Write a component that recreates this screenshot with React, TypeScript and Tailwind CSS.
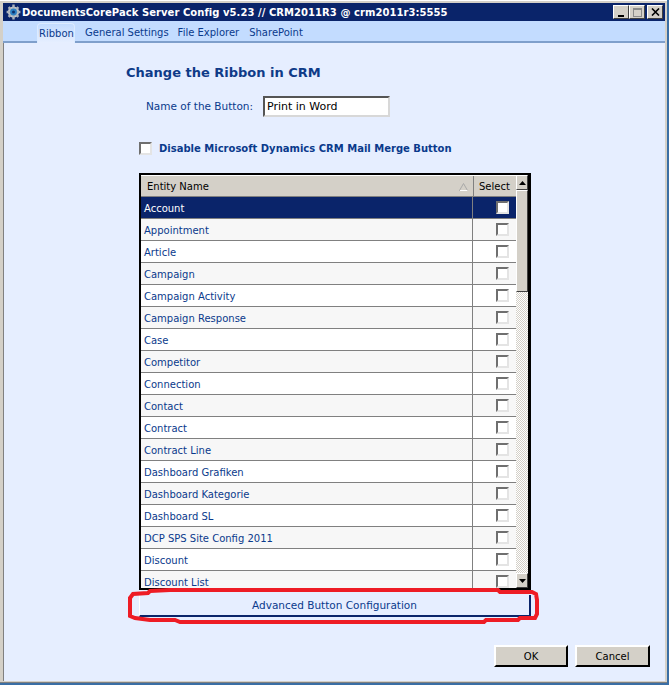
import React from 'react';

const entities = [
  'Account', 'Appointment', 'Article', 'Campaign', 'Campaign Activity', 'Campaign Response',
  'Case', 'Competitor', 'Connection', 'Contact', 'Contract', 'Contract Line',
  'Dashboard Grafiken', 'Dashboard Kategorie', 'Dashboard SL', 'DCP SPS Site Config 2011',
  'Discount', 'Discount List',
];

const raised = 'border border-t-white border-l-white border-r-[#404040] border-b-[#404040] bg-[#d4d0c8]';
const sunkenBox = 'block w-[13px] h-[13px] bg-white border-2 border-t-[#6f6f6f] border-l-[#6f6f6f] border-r-[#e4e4e4] border-b-[#e4e4e4]';
const dialogButton = 'h-[22px] bg-[#d4d0c8] text-black text-[10px] border-2 border-t-white border-l-white border-r-black border-b-black';

function GearIcon() {
  return (
    <svg width="15" height="16" viewBox="0 0 15 16" className="shrink-0">
      <circle cx="7.5" cy="8" r="5.6" fill="#c5c9cf" />
      <g stroke="#aeb4bb" strokeWidth="2.4">
        <path d="M7.5 .6v14.8M.6 8h13.8M2.6 3.1l9.8 9.8M12.4 3.1l-9.8 9.8" />
      </g>
      <circle cx="7.5" cy="8" r="3.4" fill="#2a7fc4" />
      <circle cx="7.5" cy="8" r="1.5" fill="#0c2f6b" />
    </svg>
  );
}

function WindowButton({ kind }: { kind: 'min' | 'max' | 'close' }) {
  return (
    <span className={`${raised} w-[16px] h-[14px] flex items-center justify-center`}>
      {kind === 'min' && <span className="w-[6px] h-[2px] bg-black mt-[7px] -ml-[1px]" />}
      {kind === 'max' && <span className="w-[9px] h-[9px] border border-[#8a8a8a] border-t-2" />}
      {kind === 'close' && (
        <svg width="9" height="8" viewBox="0 0 9 8">
          <path d="M1 .5l7 7M8 .5l-7 7" stroke="#000" strokeWidth="1.6" fill="none" />
        </svg>
      )}
    </span>
  );
}

function Row({ name, index }: { name: string; index: number }) {
  const selected = index === 0;
  const bg = selected ? 'bg-[#0a246a] text-white' : index % 2 === 1 ? 'bg-[#f7f7f7] text-[#0a3a8c]' : 'bg-white text-[#0a3a8c]';
  return (
    <div className={`${bg} flex h-[22px] shrink-0 border-b border-[#808080]`}>
      <div className="w-[332px] pl-[3px] pt-[1px] leading-[21px] border-r border-[#808080]">{name}</div>
      <div className="flex-1 flex items-center justify-end pr-[7px]">
        <span className={sunkenBox} />
      </div>
    </div>
  );
}

export default function App() {
  return (
    <div
      className="relative w-[669px] h-[685px] overflow-hidden bg-[#d4d0c8] border-r-2 border-[#3a6ea5] flex flex-col text-[10px] text-[#0a3a8c]"
      style={{ fontFamily: '"DejaVu Sans", Verdana, sans-serif' }}
    >
      <div className="h-[3px] shrink-0 bg-[#d4d0c8] border-t border-white" />
      {/* Title bar */}
      <div className="ml-[3px] mr-[2px] h-[18px] shrink-0 bg-[#0a246a] flex items-center pl-[3px] pr-[2px] gap-[1px] text-white">
        <GearIcon />
        <span className="font-bold text-[10px] tracking-[0.05px] whitespace-nowrap flex-1">DocumentsCorePack Server Config v5.23 // CRM2011R3 @ crm2011r3:5555</span>
        <div className="flex">
          <WindowButton kind="min" />
          <WindowButton kind="max" />
          <span className="w-[2px]" />
          <WindowButton kind="close" />
        </div>
      </div>
      {/* Menu */}
      <div className="ml-[3px] mr-[2px] h-[22px] shrink-0 bg-[#c3dcff] border-b-2 border-[#7f9fcb] flex items-start pl-[34px] text-[#0a3a8c]">
        <span className="w-[38px] h-[20px] mt-[2px] px-[1px] pt-[1px] leading-[17px] rounded-t bg-gradient-to-b from-[#c3dcff] to-[#e7efff] border-x border-t border-[#dcebff]">Ribbon</span>
        <span className="ml-[10px] mt-[1px] leading-[21px]">General Settings</span>
        <span className="ml-[9px] mt-[1px] leading-[21px]">File Explorer</span>
        <span className="ml-[10px] mt-[1px] leading-[21px]">SharePoint</span>
      </div>
      {/* Content */}
      <div className="ml-[3px] mr-[2px] h-[638px] shrink-0 bg-[#e6eeff] border-l border-[#808080] flex flex-col pl-[122px]">
        <h1 className="mt-[22px] font-bold text-[13px] leading-[16px] text-[#0f3b88]">Change the Ribbon in CRM</h1>
        <div className="mt-[15px] ml-[20px] flex items-center h-[21px] text-[10.5px]">
          <span className="w-[117px] whitespace-nowrap">Name of the Button:</span>
          <input
            readOnly
            value="Print in Word"
            className="w-[127px] h-[21px] bg-white text-black text-[11px] px-[2px] border-2 border-t-[#555] border-l-[#555] border-r-[#d8d8d8] border-b-[#d8d8d8] outline-none"
          />
        </div>
        <div className="mt-[24px] ml-[13px] flex items-center gap-[7px] h-[14px]">
          <span className={sunkenBox} />
          <span className="font-bold whitespace-nowrap">Disable Microsoft Dynamics CRM Mail Merge Button</span>
        </div>
        {/* Grid */}
        <div className="mt-[18px] ml-[13px] w-[392px] h-[417px] shrink-0 bg-white border-2 border-black border-r-[3px] flex overflow-hidden">
          <div className="w-[375px] flex flex-col text-[#0a3a8c]">
            <div className="h-[22px] shrink-0 flex bg-[#d4d0c8] text-black border-b border-[#808080] border-t border-t-white">
              <div className="w-[332px] pl-[6px] pt-[1px] leading-[21px] flex justify-between items-center">
                <span>Entity Name</span>
                <svg width="9" height="8" viewBox="0 0 9 8" className="mr-[5px]">
                  <path d="M4.5 .5L8.5 7.5H.5Z" fill="none" stroke="#a8a8a8" />
                  <path d="M1 7.5H8.5" stroke="#fff" />
                </svg>
              </div>
              <div className="flex-1 border-l border-[#808080] pt-[1px] leading-[20px] pl-[5px]">Select</div>
            </div>
            {entities.map((name, i) => (
              <Row key={name} name={name} index={i} />
            ))}
          </div>
          {/* Scrollbar */}
          <div className="flex-1 flex flex-col bg-[repeating-conic-gradient(#d4d0c8_0_25%,#ffffff_0_50%)] bg-[length:2px_2px]">
            <div className={`${raised} h-[15px] shrink-0 flex items-center justify-center`}>
              <svg width="7" height="4" viewBox="0 0 7 4"><path d="M3.5 0L7 4H0Z" fill="#000" /></svg>
            </div>
            <div className={`${raised} h-[102px] shrink-0`} />
            <div className="flex-1" />
            <div className={`${raised} h-[15px] shrink-0 flex items-center justify-center`}>
              <svg width="7" height="4" viewBox="0 0 7 4"><path d="M0 0H7L3.5 4Z" fill="#000" /></svg>
            </div>
          </div>
        </div>
        <div className="mt-[5px] ml-[13px] w-[392px] h-[22px] shrink-0 border-l border-l-white border-r-2 border-b-2 border-r-[#0a246a] border-b-[#0a246a] text-center text-[10.5px] leading-[20px] text-[#0a3a8c]">
          Advanced Button Configuration
        </div>
        <div className="mt-[28px] flex justify-end gap-[7px] pr-[15px]">
          <button className={`${dialogButton} w-[74px]`}>OK</button>
          <button className={`${dialogButton} w-[75px]`}>Cancel</button>
        </div>
      </div>
      <div className="mt-[1px] h-[1px] shrink-0 bg-[#808080]" />
      <div className="flex-1 bg-[#3a6ea5]" />
      {/* Red hand-drawn annotation */}
      <svg className="absolute left-0 top-0 pointer-events-none" width="669" height="685" viewBox="0 0 669 685">
        <path
          d="M170 590H498L500 592H532L536 594L537 600V614L535 618H520L518 620H486L484 622H180L175 620H150L135 618L130 616V598L133 594L148 593L150 591Z"
          fill="none"
          stroke="#ee1c25"
          strokeWidth="4"
        />
      </svg>
    </div>
  );
}
